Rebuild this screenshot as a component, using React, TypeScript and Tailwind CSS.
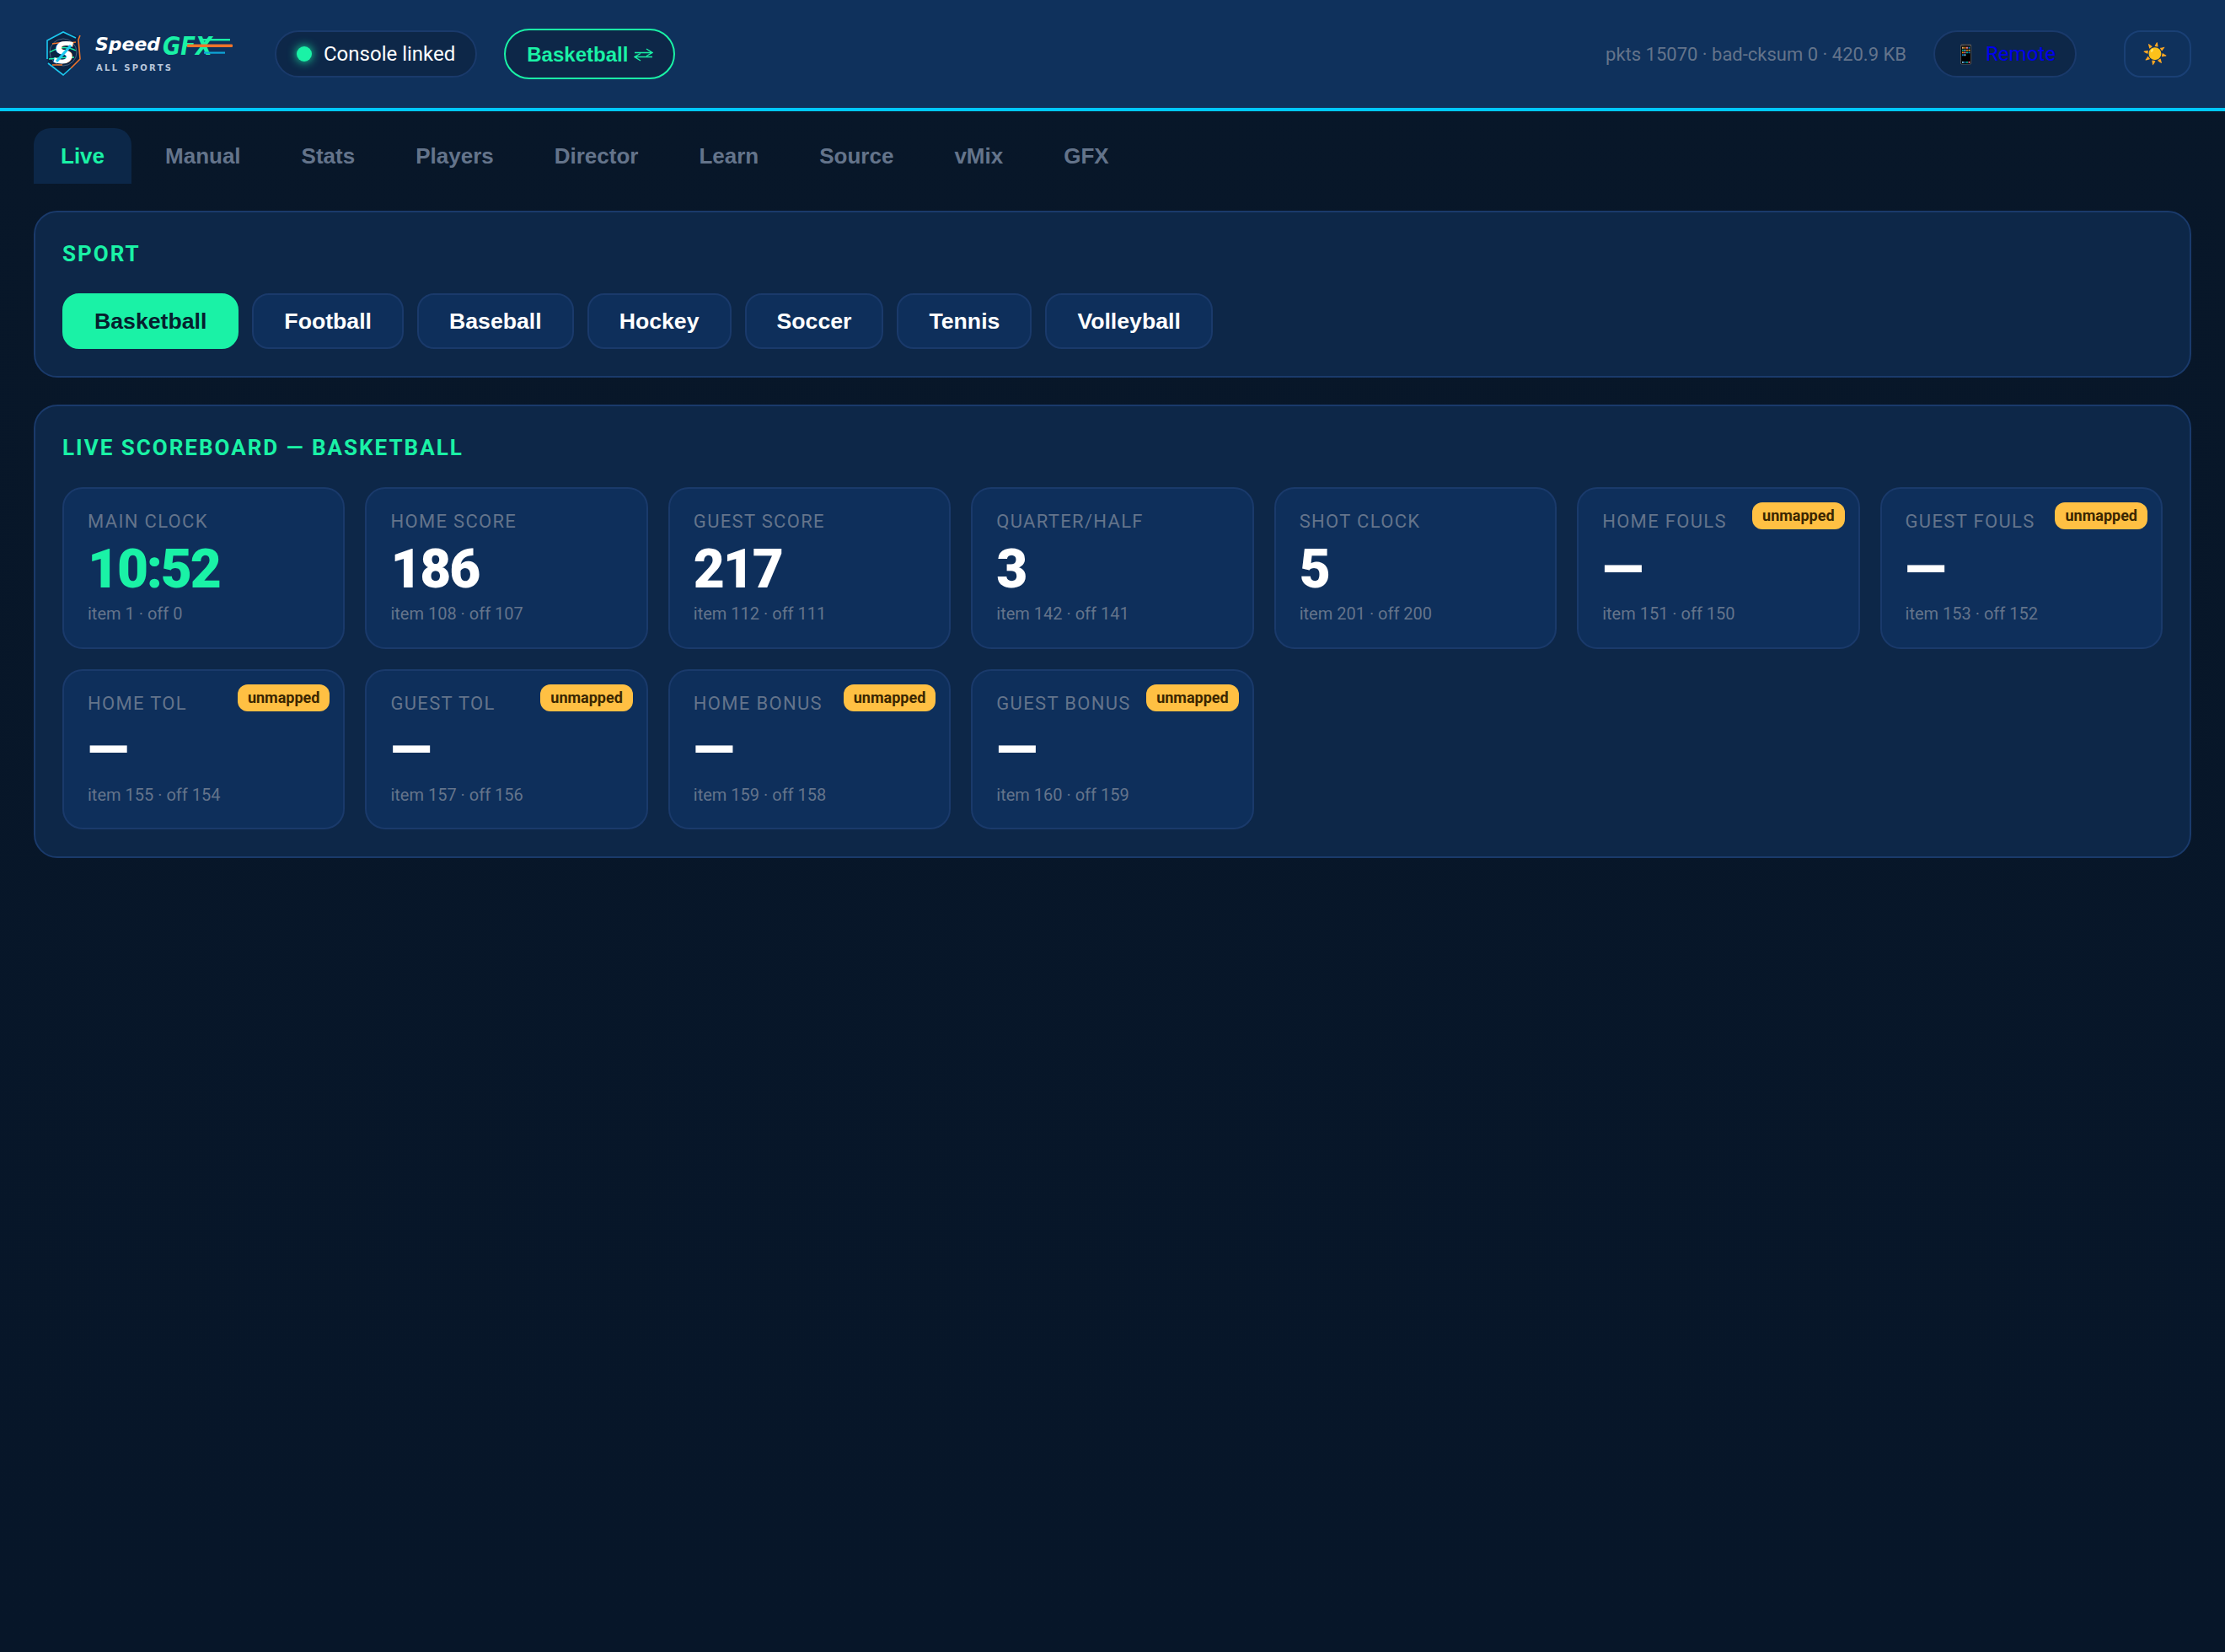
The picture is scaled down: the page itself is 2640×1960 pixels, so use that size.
import React from "react";

const roboto = "font-['Roboto',sans-serif]";
const lib = "font-['Liberation_Sans',Arial,sans-serif]";

const tabs = ["Live", "Manual", "Stats", "Players", "Director", "Learn", "Source", "vMix", "GFX"];
const sports = ["Basketball", "Football", "Baseball", "Hockey", "Soccer", "Tennis", "Volleyball"];
const cards = [
  { label: "MAIN CLOCK", value: "10:52", sub: "item 1 · off 0", green: true },
  { label: "HOME SCORE", value: "186", sub: "item 108 · off 107" },
  { label: "GUEST SCORE", value: "217", sub: "item 112 · off 111" },
  { label: "QUARTER/HALF", value: "3", sub: "item 142 · off 141" },
  { label: "SHOT CLOCK", value: "5", sub: "item 201 · off 200" },
  { label: "HOME FOULS", value: "—", sub: "item 151 · off 150", un: true },
  { label: "GUEST FOULS", value: "—", sub: "item 153 · off 152", un: true },
  { label: "HOME TOL", value: "—", sub: "item 155 · off 154", un: true },
  { label: "GUEST TOL", value: "—", sub: "item 157 · off 156", un: true },
  { label: "HOME BONUS", value: "—", sub: "item 159 · off 158", un: true },
  { label: "GUEST BONUS", value: "—", sub: "item 160 · off 159", un: true },
];

function Logo() {
  return (
    <svg width="240" height="64" viewBox="0 0 240 64" className="block">
      <path d="M23 6 L41 11 L43 38 L23 57 L5 43 L4 16 Z" fill="#0b2444" />
      <path d="M4 38 L4 16 L23 6 L38 13" fill="none" stroke="#1cc8f0" strokeWidth="1.6" />
      <path d="M5 43 L23 57 L32 49" fill="none" stroke="#1cc8f0" strokeWidth="1.6" />
      <path d="M43 10 L41 15 L43 38 L32 49" fill="none" stroke="#f0742a" strokeWidth="1.6" />
      <circle cx="23" cy="30" r="16" fill="none" stroke="#4a6380" strokeWidth="1" />
      <path d="M10 20 L24 18 M10 45 L22 45 M30 19 L38 18" stroke="#f0742a" strokeWidth="1.6" />
      <path d="M7 30 Q23 20 38 28 M6 38 Q22 36 36 36" stroke="#1af2a6" strokeWidth="1.4" fill="none" />
      <text x="24" y="43" textAnchor="middle" fontFamily="'DejaVu Sans',sans-serif" fontWeight="700" fontStyle="italic" fontSize="36" fill="#ffffff">S</text>
      <path d="M15 41 L32 22" stroke="#1cc8f0" strokeWidth="3.2" />
      <text x="61" y="28" fontFamily="'DejaVu Sans',sans-serif" fontWeight="700" fontStyle="italic" fontSize="22" fill="#ffffff" textLength="77" lengthAdjust="spacingAndGlyphs">Speed</text>
      <text x="141" y="33" fontFamily="'DejaVu Sans',sans-serif" fontWeight="700" fontStyle="italic" fontSize="30" fill="#1af2a6" textLength="59" lengthAdjust="spacingAndGlyphs">GFX</text>
      <rect x="188" y="14" width="33" height="2.4" fill="#1af2a6" />
      <rect x="170" y="20.5" width="54" height="3.4" rx="1" fill="#f0742a" />
      <rect x="190" y="29.5" width="25" height="2.2" fill="#0ea5d8" />
      <text x="62" y="52" fontFamily="'DejaVu Sans',sans-serif" fontWeight="700" fontSize="10" fill="#b8c6da" textLength="89">ALL SPORTS</text>
    </svg>
  );
}

function Swap() {
  return (
    <svg width="23" height="16" viewBox="0 0 23 16" fill="none" stroke="#1af2a6" strokeWidth="1.4" className="mt-[2px] block">
      <path d="M1 5.5H21.5M15 1L22 5.5L15 9.5" />
      <path d="M22 10.5H1.5M8 6.5L1 10.5L8 15" />
    </svg>
  );
}

function Card({ c, second }: { c: (typeof cards)[number]; second: boolean }) {
  return (
    <div className={`relative rounded-[24px] border-2 border-[#1a3a6b] bg-[#0e2f5b] px-[28px] pt-[25px] ${second ? "h-[190px]" : "h-[192px]"}`}>
      {c.un && (
        <span className="absolute right-[16px] top-[16px] rounded-[12px] bg-[#ffc043] px-[12px] py-[4px] text-[18px] font-bold leading-[24px] text-[#3a2600]">
          unmapped
        </span>
      )}
      <div className="text-[22px] leading-[28px] tracking-[1.32px] text-[#64748b]">{c.label}</div>
      <div className={`${second ? "mt-[6px]" : "mt-[8px]"} text-[64px] font-black leading-[70px] tracking-[-2.2px] ${c.green ? "text-[#1af2a6]" : "text-white"}`}>{c.value}</div>
      <div className={`${second ? "mt-[4px]" : "mt-[3px]"} text-[20px] leading-[28px] text-[#64748b]`}>{c.sub}</div>
    </div>
  );
}

export default function App() {
  return (
    <div className={`min-h-[1960px] w-[2640px] bg-gradient-to-b from-[#081729] to-[#071629] ${roboto}`}>
      <header className="flex h-[132px] items-center border-b-4 border-[#00c8ff] bg-[#0f315c] pl-[52px] pr-[40px]">
        <Logo />
        <div className="ml-[34px] flex h-[56px] items-center gap-[14px] rounded-full border-2 border-[#1a3a6b] bg-[#0d2748] pl-[24px] pr-[24px] text-[24px] text-white">
          <span className="h-[18px] w-[18px] rounded-full bg-[#1af2a6] shadow-[0_0_12px_#1af2a6]" />
          Console linked
        </div>
        <button className={`ml-[32px] flex h-[60px] items-center gap-[7px] rounded-full border-2 border-[#1af2a6] bg-[#0d2748] pl-[25px] pr-[24px] text-[24px] font-bold text-[#1af2a6] ${lib}`}>
          <span className="pt-[2px]">Basketball</span>
          <Swap />
        </button>
        <div className="ml-auto text-[22px] text-[#64748b]">pkts 15070 · bad-cksum 0 · 420.9 KB</div>
        <a className="ml-[32px] flex h-[56px] w-[170px] items-center justify-center gap-[10px] rounded-full border-2 border-[#1a3a6b] bg-[#0d2748] text-[24px] text-[#0000ee]">
          <span className="text-[22px]">📱</span>Remote
        </a>
        <button className="ml-[56px] flex h-[56px] w-[80px] items-center justify-center rounded-[20px] border-2 border-[#1a4075] pr-[6px] text-[24px]">
          ☀️
        </button>
      </header>

      <main className="px-[40px] pt-[20px]">
        <nav className={`flex gap-[8px] ${lib}`}>
          {tabs.map((t, i) => (
            <div
              key={t}
              className={`flex h-[66px] items-center rounded-t-[20px] px-[32px] text-[26px] font-bold ${i === 0 ? "bg-[#0c2748] text-[#1af2a6]" : "text-[#64748b]"}`}
            >
              {t}
            </div>
          ))}
        </nav>

        <section className="mt-[32px] h-[198px] rounded-[28px] border-2 border-[#1a3a6b] bg-[#0d2748] px-[32px] pt-[33px]">
          <h2 className="text-[26px] font-bold leading-[32px] tracking-[2px] text-[#1af2a6]">SPORT</h2>
          <div className={`mt-[31px] flex gap-[16px] ${lib}`}>
            {sports.map((s, i) => (
              <button
                key={s}
                className={`h-[66px] rounded-[20px] border-2 px-[36px] text-[26.67px] font-bold ${i === 0 ? "border-[#1af2a6] bg-[#1af2a6] text-[#06202e]" : "border-[#1a3a6b] bg-[#0e2f5b] text-white"}`}
              >
                {s}
              </button>
            ))}
          </div>
        </section>

        <section className="mt-[32px] rounded-[28px] border-2 border-[#1a3a6b] bg-[#0d2748] px-[32px] pb-[32px] pt-[33px]">
          <h2 className="text-[26px] font-bold leading-[32px] tracking-[2px] text-[#1af2a6]">LIVE SCOREBOARD — BASKETBALL</h2>
          <div className="mt-[31px] grid grid-cols-7 gap-[24px]">
            {cards.map((c, i) => (
              <Card key={c.label} c={c} second={i >= 7} />
            ))}
          </div>
        </section>
      </main>
    </div>
  );
}
